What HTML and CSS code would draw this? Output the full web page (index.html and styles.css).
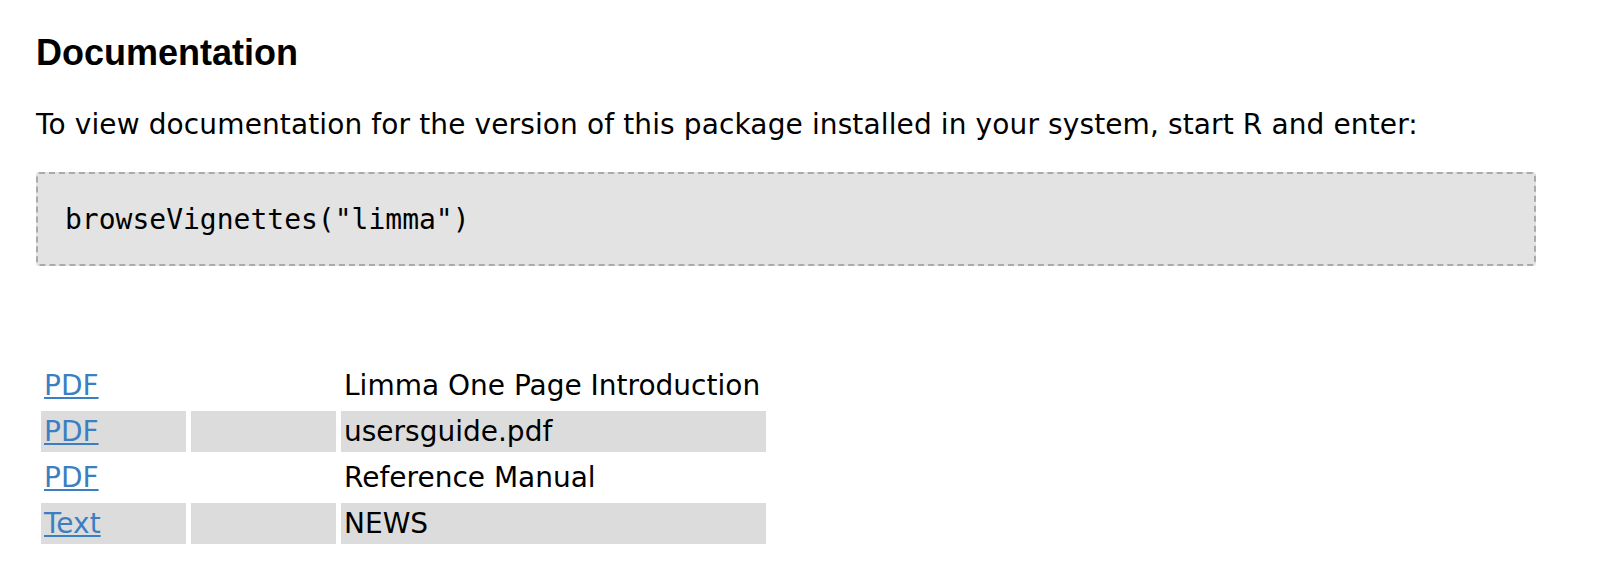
FILE: index.html
```html
<!DOCTYPE html>
<html>
<head>
<meta charset="utf-8">
<title>Documentation</title>
<link rel="stylesheet" href="styles.css">
</head>
<body>
<div class="page">
  <h2 class="title">Documentation</h2>
  <p class="intro">To view documentation for the version of this package installed in your system, start R and enter:</p>
  <pre class="code">browseVignettes("limma")</pre>
  <table class="docs">
    <tr class="odd">
      <td class="c1"><a href="#">PDF</a></td>
      <td class="c2"></td>
      <td class="c3">Limma One Page Introduction</td>
    </tr>
    <tr class="even">
      <td class="c1"><a href="#">PDF</a></td>
      <td class="c2"></td>
      <td class="c3">usersguide.pdf</td>
    </tr>
    <tr class="odd">
      <td class="c1"><a href="#">PDF</a></td>
      <td class="c2"></td>
      <td class="c3">Reference Manual</td>
    </tr>
    <tr class="even">
      <td class="c1"><a href="#">Text</a></td>
      <td class="c2"></td>
      <td class="c3">NEWS</td>
    </tr>
  </table>
</div>
</body>
</html>
```

FILE: styles.css
```css
html, body {
  margin: 0;
  padding: 0;
  background: #ffffff;
}

.page {
  padding: 0 62px 0 36px;
  font-family: "DejaVu Sans", Verdana, sans-serif;
  font-size: 28px;
  color: #000;
}

.title {
  font-family: "Liberation Sans", Arial, Helvetica, sans-serif;
  font-weight: bold;
  font-size: 36px;
  letter-spacing: 0;
  line-height: 40px;
  margin: 33px 0 0 0;
}

.intro {
  line-height: 34px;
  letter-spacing: 0.12px;
  margin: 35px 0 0 0;
}

.code {
  font-family: "DejaVu Sans Mono", Menlo, monospace;
  font-size: 28px;
  line-height: 34px;
  background: #e3e3e3;
  border: 2px dashed #aaaaaa;
  border-radius: 3px;
  padding: 29px 27px 27px 27px;
  margin: 30px 0 0 0;
}

.docs {
  border-spacing: 5px;
  margin: 94px 0 0 0;
  table-layout: fixed;
}

.docs td {
  padding: 3px 1px 3px 3px;
  line-height: 35px;
  vertical-align: middle;
  white-space: nowrap;
}

.docs .c1 { width: 141px; }
.docs .c2 { width: 141px; }
.docs .c3 { width: 421px; }

.docs tr.even td {
  background: #dcdcdc;
}

.docs a {
  color: #3b7fc2;
  text-decoration: underline;
}
```
